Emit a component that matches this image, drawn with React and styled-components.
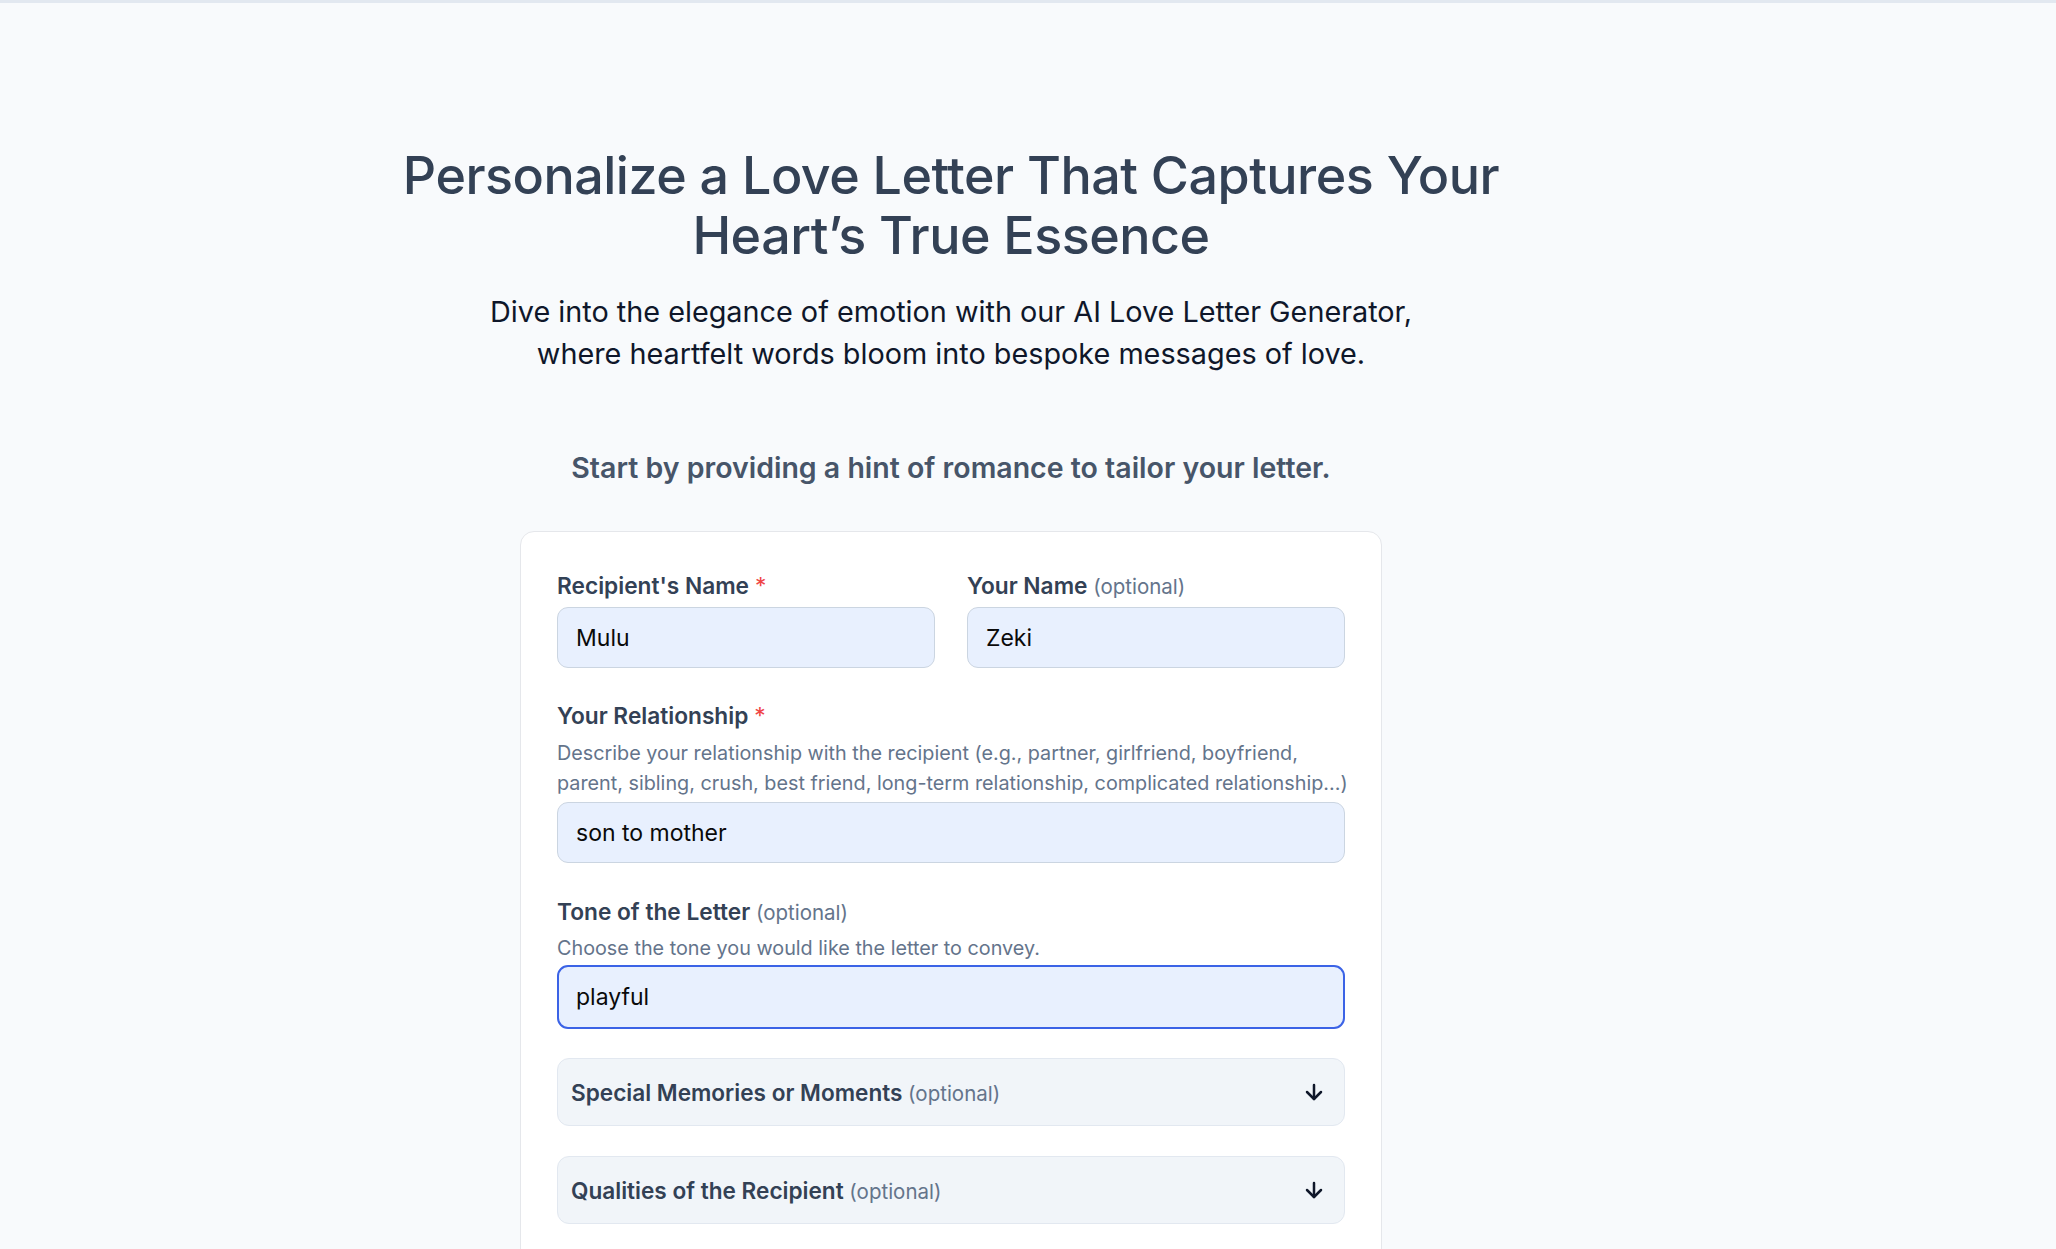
import React from 'react';
import styled, { createGlobalStyle } from 'styled-components';
import { ArrowDown } from 'lucide-react';

const GlobalStyle = createGlobalStyle`
  html, body {
    margin: 0;
    padding: 0;
    background: #f8fafc;
  }
  body {
    font-family: Inter, "Noto Sans", "Liberation Sans", sans-serif;
    color: #0f172a;
  }
  * {
    box-sizing: border-box;
  }
`;

const Page = styled.div`
  min-height: 1249px;
  border-top: 3px solid #e2e8f0;
  background: #f8fafc;
  padding-right: 154px;
`;

const Main = styled.main`
  display: flex;
  flex-direction: column;
  align-items: center;
`;

const Title = styled.h1`
  margin: 143px 0 0;
  font-size: 52px;
  line-height: 60px;
  font-weight: 500;
  letter-spacing: -0.5px;
  color: #334155;
  text-align: center;
`;

const Subtitle = styled.p`
  margin: 25px 0 0;
  font-size: 28.8px;
  line-height: 42px;
  font-weight: 400;
  color: #0f172a;
  text-align: center;
`;

const Prompt = styled.h2`
  margin: 75px 0 0;
  font-size: 28.5px;
  line-height: 36px;
  font-weight: 600;
  color: #475569;
  text-align: center;
`;

const Card = styled.form`
  margin-top: 45px;
  width: 862px;
  background: #ffffff;
  border: 1px solid #e5e7eb;
  border-radius: 14px;
  padding: 40px 36px 60px;
  display: flex;
  flex-direction: column;
`;

const Row = styled.div`
  display: grid;
  grid-template-columns: 1fr 1fr;
  gap: 32px;
`;

const Field = styled.div`
  display: flex;
  flex-direction: column;
  margin-top: ${(p) => p.$gap || 0}px;
`;

const Label = styled.label`
  display: block;
  height: 28px;
  font-size: 22.7px;
  line-height: 28px;
  font-weight: 600;
  color: #334155;
  white-space: nowrap;
  margin-bottom: ${(p) => p.$spacing || 7}px;
`;

const Optional = styled.span`
  font-size: 20.5px;
  line-height: 1;
  font-weight: 400;
  color: #64748b;
`;

const Required = styled.span`
  color: #ef4444;
  font-weight: 400;
  margin-left: 6px;
`;

const Hint = styled.p`
  margin: 0 0 ${(p) => p.$spacing || 4}px;
  font-size: 19.8px;
  line-height: 30px;
  color: #64748b;
  white-space: nowrap;
`;

const Input = styled.input`
  height: ${(p) => (p.$focused ? 64 : 61)}px;
  width: 100%;
  padding: 0 ${(p) => (p.$focused ? 17 : 18)}px;
  font-family: inherit;
  font-size: 23px;
  color: #0a0a0a;
  background: #e8f0fe;
  border: ${(p) => (p.$focused ? '2px solid #3b63e6' : '1px solid #cbd5e1')};
  border-radius: 11px;
  outline: none;
  caret-color: #000;
`;

const Accordion = styled.button`
  margin-top: ${(p) => p.$gap}px;
  height: 68px;
  width: 100%;
  display: flex;
  align-items: center;
  justify-content: space-between;
  padding: 0 18px 0 13px;
  background: #f1f5f9;
  border: 1px solid #e2e8f0;
  border-radius: 12px;
  font-family: inherit;
  cursor: pointer;
`;

const AccordionTitle = styled.span`
  font-size: 22.6px;
  font-weight: 600;
  color: #334155;
`;

const App = () => {
  return (
    <>
      <GlobalStyle />
      <Page>
        <Main>
          <Title>
            Personalize a Love Letter That Captures Your
            <br />
            Heart’s True Essence
          </Title>
          <Subtitle>
            Dive into the elegance of emotion with our AI Love Letter Generator,
            <br />
            where heartfelt words bloom into bespoke messages of love.
          </Subtitle>
          <Prompt>Start by providing a hint of romance to tailor your letter.</Prompt>

          <Card onSubmit={(e) => e.preventDefault()}>
            <Row>
              <Field>
                <Label htmlFor="recipient">
                  Recipient's Name<Required>*</Required>
                </Label>
                <Input id="recipient" defaultValue="Mulu" />
              </Field>
              <Field>
                <Label htmlFor="sender">
                  Your Name <Optional>(optional)</Optional>
                </Label>
                <Input id="sender" defaultValue="Zeki" />
              </Field>
            </Row>

            <Field $gap={34}>
              <Label htmlFor="relationship" $spacing={8}>
                Your Relationship<Required>*</Required>
              </Label>
              <Hint>
                Describe your relationship with the recipient (e.g., partner, girlfriend, boyfriend,
                <br />
                parent, sibling, crush, best friend, long-term relationship, complicated relationship...)
              </Hint>
              <Input id="relationship" defaultValue="son to mother" />
            </Field>

            <Field $gap={35}>
              <Label htmlFor="tone">
                Tone of the Letter <Optional>(optional)</Optional>
              </Label>
              <Hint $spacing={2}>Choose the tone you would like the letter to convey.</Hint>
              <Input id="tone" defaultValue="playful" $focused autoFocus />
            </Field>

            <Accordion type="button" $gap={29}>
              <AccordionTitle>
                Special Memories or Moments <Optional>(optional)</Optional>
              </AccordionTitle>
              <ArrowDown size={24} strokeWidth={2.5} color="#0f172a" />
            </Accordion>

            <Accordion type="button" $gap={30}>
              <AccordionTitle>
                Qualities of the Recipient <Optional>(optional)</Optional>
              </AccordionTitle>
              <ArrowDown size={24} strokeWidth={2.5} color="#0f172a" />
            </Accordion>
          </Card>
        </Main>
      </Page>
    </>
  );
};

export default App;
